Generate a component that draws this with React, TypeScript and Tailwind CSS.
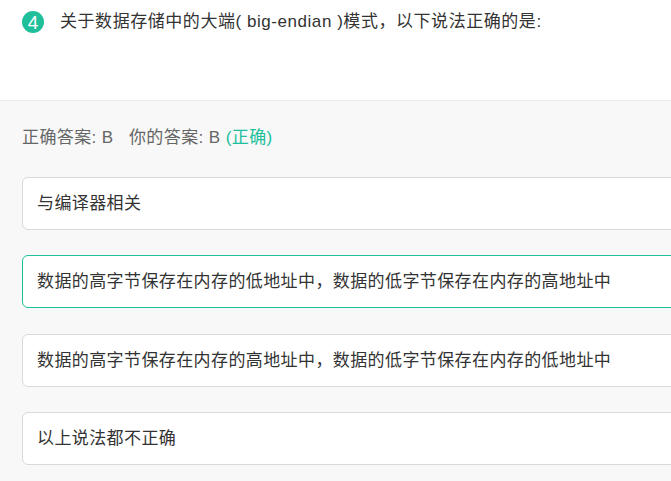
import React from "react";

const font = { fontFamily: '"Liberation Sans", "Noto Sans CJK SC", sans-serif' };

const options = [
  { text: "与编译器相关", active: false },
  { text: "数据的高字节保存在内存的低地址中，数据的低字节保存在内存的高地址中", active: true },
  { text: "数据的高字节保存在内存的高地址中，数据的低字节保存在内存的低地址中", active: false },
  { text: "以上说法都不正确", active: false },
];

export default function App() {
  return (
    <div className="w-[671px] h-[481px] overflow-hidden bg-[#f8f8f8]" style={font}>
      <div className="h-[101px] bg-white border-b border-[#ececec] pl-[22px] pt-[11px]">
        <div className="flex items-center gap-[16px]">
          <div className="w-[22px] h-[22px] rounded-full bg-[#20bf9c] text-white flex items-center justify-center text-[19px] leading-none shrink-0">
            4
          </div>
          <div className="text-[17px] tracking-[0.55px] text-[#333] leading-[22px]">
            关于数据存储中的大端( big-endian )模式，以下说法正确的是:
          </div>
        </div>
      </div>
      <div className="pl-[22px] pt-[26px]">
        <div className="text-[17px] tracking-[0.4px] text-[#666] leading-[22px]">
          正确答案: B&nbsp;&nbsp;&nbsp;你的答案: B <span className="text-[#20bf9c]">(正确)</span>
        </div>
        <div className="flex flex-col gap-[25.3px] mt-[28px] w-[700px]">
          {options.map((o, i) => (
            <div
              key={i}
              className={
                o.active
                  ? "h-[53px] bg-white rounded-[6px] border border-[#20bf9c] flex items-center pl-[14px]"
                  : "h-[53px] bg-white rounded-[6px] border border-[#d9d9d9] flex items-center pl-[14px]"
              }
            >
              <span className="text-[17px] tracking-[0.4px] text-[#333] leading-none">{o.text}</span>
            </div>
          ))}
        </div>
      </div>
    </div>
  );
}
